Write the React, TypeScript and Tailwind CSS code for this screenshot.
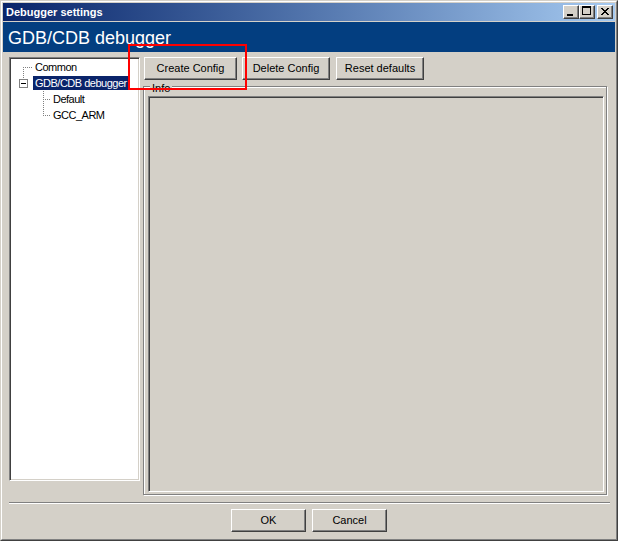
import React from "react";

const btn =
  "flex items-center justify-center bg-[#d4d0c8] border border-white border-r-[#404040] border-b-[#404040] shadow-[inset_-1px_-1px_0_#808080] text-[11px] text-black leading-none";

function TitleButton({ kind }: { kind: "min" | "max" | "close" }) {
  return (
    <div className={"w-[16px] h-[14px] " + btn}>
      <svg width="14" height="12" viewBox="0 0 14 12" shapeRendering="crispEdges">
        {kind === "min" && <rect x="3" y="8" width="6" height="2" fill="#000" />}
        {kind === "max" && (
          <g fill="#000">
            <rect x="2" y="0" width="9" height="2" />
            <rect x="2" y="0" width="1" height="9" />
            <rect x="10" y="0" width="1" height="9" />
            <rect x="2" y="8" width="9" height="1" />
          </g>
        )}
        {kind === "close" && (
          <g fill="#000">
            <rect x="3" y="2" width="2" height="1" />
            <rect x="9" y="2" width="2" height="1" />
            <rect x="4" y="3" width="2" height="1" />
            <rect x="8" y="3" width="2" height="1" />
            <rect x="5" y="4" width="4" height="1" />
            <rect x="6" y="5" width="2" height="1" />
            <rect x="5" y="6" width="4" height="1" />
            <rect x="4" y="7" width="2" height="1" />
            <rect x="8" y="7" width="2" height="1" />
            <rect x="3" y="8" width="2" height="1" />
            <rect x="9" y="8" width="2" height="1" />
          </g>
        )}
      </svg>
    </div>
  );
}

function TreeLines() {
  const dot = { stroke: "#808080", strokeWidth: 1, strokeDasharray: "1 1" };
  return (
    <svg
      className="absolute left-0 top-0"
      width="120"
      height="70"
      viewBox="0 0 120 70"
      shapeRendering="crispEdges"
    >
      <line x1="12.5" y1="8" x2="12.5" y2="24" {...dot} />
      <line x1="12" y1="8.5" x2="22" y2="8.5" {...dot} />
      <line x1="32.5" y1="32" x2="32.5" y2="57" {...dot} />
      <line x1="32" y1="40.5" x2="40" y2="40.5" {...dot} />
      <line x1="32" y1="56.5" x2="40" y2="56.5" {...dot} />
      <rect x="8.5" y="20.5" width="8" height="8" fill="#fff" stroke="#808080" strokeWidth="1" />
      <rect x="10" y="24" width="5" height="1" fill="#000" />
    </svg>
  );
}

export default function App() {
  return (
    <div className="relative w-[618px] h-[541px] bg-[#d4d0c8] border border-[#d4d0c8] border-r-[#404040] border-b-[#404040] font-['Liberation_Sans',Arial,sans-serif] overflow-hidden">
      <div className="h-full border border-white border-r-[#808080] border-b-[#808080] p-[1px] flex flex-col">
        {/* title bar */}
        <div className="h-[18px] flex items-center bg-linear-to-r from-[#0a246a] to-[#a6caf0]">
          <span className="pl-[3px] text-white font-bold text-[11px] leading-[13px]">Debugger settings</span>
          <div className="ml-auto mr-[2px] flex items-center">
            <TitleButton kind="min" />
            <TitleButton kind="max" />
            <div className="w-[2px]" />
            <TitleButton kind="close" />
          </div>
        </div>
        <div className="h-[1px]" />
        {/* header */}
        <div className="h-[30px] bg-[#033e80] pl-[5px] pt-[3px]">
          <span className="block text-white text-[18px] leading-[27px]">GDB/CDB debugger</span>
        </div>
        {/* body */}
        <div className="flex flex-col pt-[5px]">
          <div className="flex h-[439px] ml-[6px]">
            {/* tree */}
            <div className="relative w-[131px] h-[424px] bg-white border border-[#808080] border-r-white border-b-white shadow-[inset_1px_1px_0_#404040,inset_-1px_-1px_0_#d4d0c8] pt-[1px] pl-[1px]">
              <div className="relative text-[11px] text-black tracking-[-0.5px]">
                <TreeLines />
                <div className="relative h-[16px] flex items-center">
                  <span className="ml-[22px] px-[2px] h-[14px] leading-[14px] whitespace-nowrap">Common</span>
                </div>
                <div className="relative h-[16px] flex items-center">
                  <span className="ml-[22px] px-[2px] h-[14px] leading-[14px] whitespace-nowrap bg-[#0a246a] text-white">GDB/CDB debugger</span>
                </div>
                <div className="relative h-[16px] flex items-center">
                  <span className="ml-[40px] px-[2px] h-[14px] leading-[14px] whitespace-nowrap">Default</span>
                </div>
                <div className="relative h-[16px] flex items-center">
                  <span className="ml-[40px] px-[2px] h-[14px] leading-[14px] whitespace-nowrap">GCC_ARM</span>
                </div>
              </div>
            </div>
            {/* right column */}
            <div className="ml-[3px] flex flex-col">
              <div className="flex h-[23px]">
                <div className={"ml-[1px] w-[93px] h-[23px] " + btn}>Create Config</div>
                <div className={"ml-[5px] w-[88px] h-[23px] " + btn}>Delete Config</div>
                <div className={"ml-[6px] w-[88px] h-[23px] " + btn}>Reset defaults</div>
              </div>
              <div className="relative mt-[6px] w-[464px] h-[409px] border border-[#808080] shadow-[1px_1px_0_#fff,inset_1px_1px_0_#fff]">
                <span className="absolute left-[6px] top-[-5px] px-[2px] bg-[#d4d0c8] text-[11px] leading-[13px] text-black">Info</span>
                <div className="ml-[4px] mt-[9px] w-[456px] h-[396px] border border-[#808080] border-r-white border-b-white shadow-[inset_1px_1px_0_#404040,inset_-1px_-1px_0_#d4d0c8]" />
              </div>
            </div>
          </div>
          {/* separator */}
          <div className="ml-[6px] mt-[6px] w-[601px] h-[2px] border-t border-t-[#808080] border-b border-b-white" />
          {/* bottom buttons */}
          <div className="mt-[5px] flex justify-center gap-[6px]">
            <div className={"w-[75px] h-[23px] " + btn}>OK</div>
            <div className={"w-[75px] h-[23px] " + btn}>Cancel</div>
          </div>
        </div>
      </div>
      {/* red annotation box */}
      <div className="absolute left-[127px] top-[43px] w-[119px] h-[46px] border-2 border-[#ff0000]" />
    </div>
  );
}
